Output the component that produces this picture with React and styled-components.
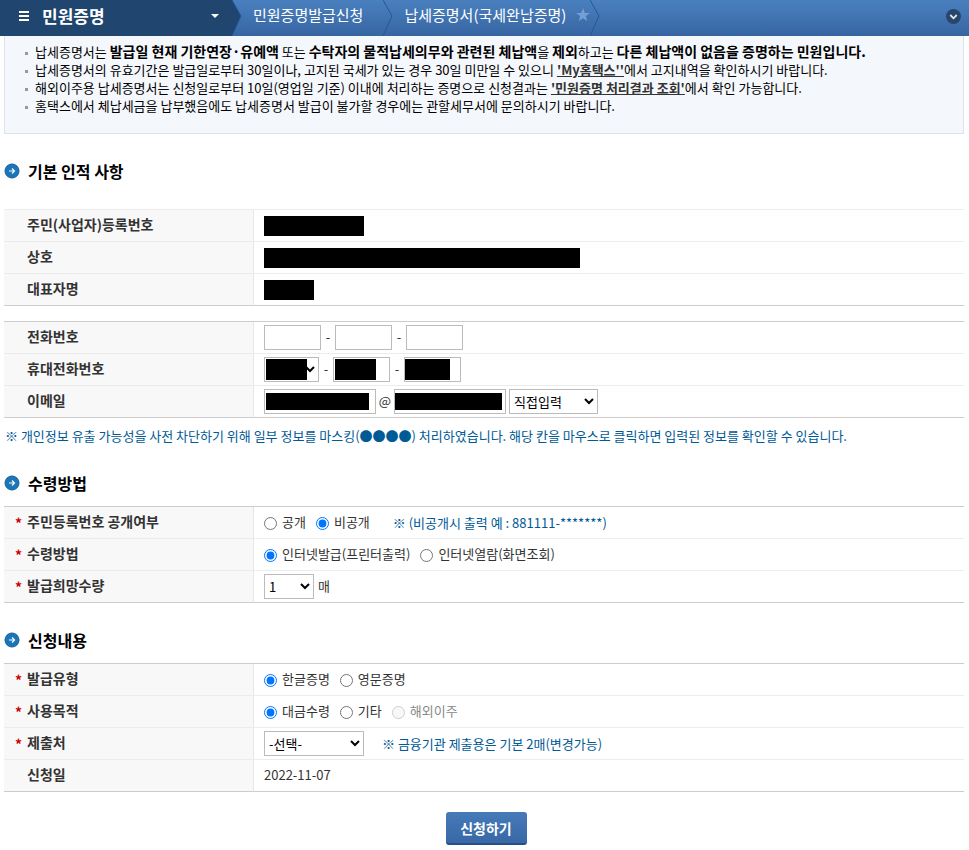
import styled, { createGlobalStyle } from "styled-components";

const GlobalStyle = createGlobalStyle`
  * {
    box-sizing: border-box;
  }

  body {
    margin: 0;
    background: #ffffff;
    color: #333333;
  }

  body, button, input, select {
    font-family: "Noto Sans CJK KR", "Liberation Sans", sans-serif;
    font-size: 13px;
    line-height: 18px;
  }
`;

// Header
const Header = styled.header`
  display: flex;
  align-items: stretch;
  height: 36px;
  background: linear-gradient(#4a80bf, #3765a2);
`;

const MenuButton = styled.button`
  display: flex;
  align-items: center;
  gap: 12px;
  width: 232px;
  padding: 0 13px 4px 18px;
  border: 0;
  background: #20456f;
  color: #ffffff;
  font-size: 17px;
  font-weight: 700;
  text-align: left;

  svg:last-child {
    margin-left: auto;
  }
`;

const Crumbs = styled.nav`
  display: flex;
  flex-grow: 1;
`;

const Crumb = styled.a`
  display: flex;
  align-items: center;
  gap: 10px;
  padding: 0 0 6px 11px;
  color: #ffffff;
  font-size: 15px;
  text-decoration: none;
  white-space: nowrap;

  & + svg {
    margin-left: ${(props) => (props.$last ? "0" : "20px")};
  }
`;

const ExpandButton = styled.button`
  align-self: center;
  display: flex;
  margin-right: 8px;
  padding: 0 0 3px;
  border: 0;
  background: none;
`;

const Main = styled.main`
  padding: 0 5px 4px 4px;
`;

const Notice = styled.ul`
  margin: 0;
  padding: 7px 0 18px 20px;
  border: 1px solid #dde3ee;
  border-top: 0;
  background: #f4f7fc;
  color: #000000;
  list-style: none;
`;

const NoticeItem = styled.li`
  &::before {
    content: "";
    display: inline-block;
    width: 3px;
    height: 3px;
    margin-right: 7px;
    background: #999999;
    vertical-align: middle;
  }

  b {
    font-size: 14px;
    line-height: 14px;
  }

  a {
    color: #333333;
    font-weight: 700;
  }
`;

const SectionTitle = styled.h2`
  display: flex;
  align-items: center;
  gap: 8px;
  margin: 27px 0 ${(props) => (props.$spaced ? "28px" : "13px")};
  color: #000000;
  font-size: 16px;
  line-height: 20px;
`;

const Table = styled.table`
  width: 100%;
  margin-bottom: ${(props) => (props.$spaced ? "15px" : "0")};
  border-top: 1px solid ${(props) => (props.$light ? "#ececec" : "#cccccc")};
  border-spacing: 0;
  table-layout: fixed;

  th, td {
    height: 32px;
    border-bottom: 1px solid #ececec;
  }

  tr:last-child th, tr:last-child td {
    border-bottom-color: #cccccc;
  }

  th {
    width: 250px;
    padding: 0 0 3px 11px;
    border-right: 1px solid #e6e6e6;
    background: #f8f8f8;
    font-size: 14px;
    text-align: left;
  }

  td {
    padding: 0 0 0 10px;
  }
`;

const Mark = styled.span`
  display: inline-block;
  width: 12px;
  color: #cc0000;
  line-height: 14px;
  vertical-align: middle;
`;

const Fields = styled.div`
  display: flex;
  align-items: center;
`;

const Separator = styled.span`
  width: ${(props) => (props.$wide ? "18px" : "14px")};
  padding-bottom: 2px;
  text-align: center;
`;

const Redacted = styled.span`
  display: block;
  width: ${(props) => props.$width};
  height: 20px;
  background: #000000;
`;

// $mask is the width of the hidden part of the value
const maskFill = (props) =>
  props.$mask
    ? `linear-gradient(#000000, #000000) ${props.$flush ? "0" : "1px"} 50% / ${props.$mask} ${props.$maskHeight || "21px"} no-repeat #ffffff`
    : "#ffffff";

const TextBox = styled.input`
  width: ${(props) => props.$width || "57px"};
  height: 25px;
  padding: 0 4px;
  border: 1px solid #bbbbbb;
  background: ${maskFill};
`;

const Select = styled.select`
  width: ${(props) => props.$width};
  height: 25px;
  margin-left: ${(props) => (props.$after ? "3px" : "0")};
  padding: 0;
  border: 1px solid #bbbbbb;
  border-radius: 0;
  background: ${maskFill};
  color: #000000;
`;

const Option = styled.label`
  display: flex;
  align-items: center;
  gap: 5px;
  margin-right: 10px;
  padding-bottom: 2px;
  color: ${(props) => (props.$disabled ? "#888888" : "#333333")};

  input {
    width: 13px;
    height: 13px;
    margin: 4px 0 0;
  }
`;

const Hint = styled.span`
  margin-left: ${(props) => props.$gap || "0"};
  color: #005a96;
`;

const PlainText = styled.span`
  padding: 0 0 2px ${(props) => (props.$indent ? "4px" : "0")};
`;

const MaskingNote = styled.p`
  margin: 0;
  padding: 8px 0 0 1px;
  color: #005a96;
  line-height: 20px;
`;

const Actions = styled.div`
  display: flex;
  justify-content: center;
  padding: 20px 0 0 4px;
`;

const SubmitButton = styled.button`
  width: 81px;
  height: 33px;
  padding: 0;
  border: 0;
  border-bottom: 2px solid #24508a;
  border-radius: 3px;
  background: linear-gradient(#467ab9, #3868a6);
  color: #ffffff;
  font-size: 14px;
  font-weight: 700;
`;

// Icons
const HamburgerIcon = () => (
  <svg width="12" height="10" viewBox="0 0 12 10" fill="#ffffff" aria-hidden="true">
    <path d="M1 0h10v2H1zM1 4h10v2H1zM1 8h10v2H1z" />
  </svg>
);

const CaretIcon = () => (
  <svg width="8" height="4" viewBox="0 0 8 4" fill="#ffffff" aria-hidden="true">
    <path d="M0 0h8L4 4z" />
  </svg>
);

const Chevron = ({ filled }) => (
  <svg width="10" height="36" viewBox="0 0 10 36" fill="none" aria-hidden="true">
    {filled && <path d="M0 0L9 16L0 36z" fill="#20456f" />}
    <path d="M0 0L9 16L0 36" stroke="#205a94" />
  </svg>
);

const StarIcon = () => (
  <svg width="14" height="14" viewBox="0 0 14 14" fill="#759fd2" aria-hidden="true">
    <path d="M7 0l1.8 4.9H14L9.8 8.1l1.5 5L7 10.2l-4.3 2.9 1.5-5L0 4.9h5.2z" />
  </svg>
);

const ExpandIcon = () => (
  <svg width="15" height="15" viewBox="0 0 15 15" fill="none" aria-hidden="true">
    <circle cx="7.5" cy="7.5" r="7.5" fill="#284669" />
    <path d="M4.3 6l3.2 3.3L10.7 6" stroke="#dce5f0" strokeWidth="1.8" />
  </svg>
);

const ArrowIcon = () => (
  <svg width="16" height="16" viewBox="0 0 16 16" fill="none" aria-hidden="true">
    <circle cx="8" cy="8" r="7" fill="#1976b9" stroke="#155f9b" />
    <path d="M5 8h5.5M8 5.5L10.5 8L8 10.5" stroke="#ffffff" strokeWidth="1.2" />
  </svg>
);

function Row({ label, htmlFor, required, children }) {
  return (
    <tr>
      <th scope="row">
        <Mark>{required && "*"}</Mark>
        {htmlFor ? <label htmlFor={htmlFor}>{label}</label> : label}
      </th>
      <td>
        <Fields>{children}</Fields>
      </td>
    </tr>
  );
}

function Radio({ name, label, checked, disabled }) {
  return (
    <Option $disabled={disabled}>
      <input type="radio" name={name} defaultChecked={checked} disabled={disabled} />
      {label}
    </Option>
  );
}

export default function App() {
  return (
    <>
      <GlobalStyle />
      <Header>
        <MenuButton type="button">
          <HamburgerIcon />
          민원증명
          <CaretIcon />
        </MenuButton>
        <Chevron filled />
        <Crumbs>
          <Crumb href="#issue">민원증명발급신청</Crumb>
          <Chevron />
          <Crumb href="#certificate" $last>
            납세증명서(국세완납증명)
            <StarIcon />
          </Crumb>
          <Chevron />
        </Crumbs>
        <ExpandButton type="button" aria-label="펼치기">
          <ExpandIcon />
        </ExpandButton>
      </Header>

      <Main>
        <Notice>
          <NoticeItem>
            납세증명서는 <b>발급일 현재 기한연장·유예액</b> 또는 <b>수탁자의 물적납세의무와 관련된 체납액</b>을 <b>제외</b>하고는 <b>다른 체납액이 없음을 증명하는 민원입니다.</b>
          </NoticeItem>
          <NoticeItem>
            납세증명서의 유효기간은 발급일로부터 30일이나, 고지된 국세가 있는 경우 30일 미만일 수 있으니 <a href="#my">'My홈택스''</a>에서 고지내역을 확인하시기 바랍니다.
          </NoticeItem>
          <NoticeItem>
            해외이주용 납세증명서는 신청일로부터 10일(영업일 기준) 이내에 처리하는 증명으로 신청결과는 <a href="#result">'민원증명 처리결과 조회'</a>에서 확인 가능합니다.
          </NoticeItem>
          <NoticeItem>홈택스에서 체납세금을 납부했음에도 납세증명서 발급이 불가할 경우에는 관할세무서에 문의하시기 바랍니다.</NoticeItem>
        </Notice>

        <SectionTitle $spaced>
          <ArrowIcon />
          기본 인적 사항
        </SectionTitle>
        <Table $light $spaced>
          <tbody>
            <Row label="주민(사업자)등록번호">
              <Redacted $width="100px" />
            </Row>
            <Row label="상호">
              <Redacted $width="316px" />
            </Row>
            <Row label="대표자명">
              <Redacted $width="50px" />
            </Row>
          </tbody>
        </Table>
        <Table>
          <tbody>
            <Row label="전화번호" htmlFor="tel">
              <TextBox id="tel" />
              <Separator>-</Separator>
              <TextBox aria-label="전화번호 가운데 자리" />
              <Separator>-</Separator>
              <TextBox aria-label="전화번호 끝자리" />
            </Row>
            <Row label="휴대전화번호" htmlFor="mobile">
              <Select id="mobile" $width="55px" $mask="41px">
                <option></option>
              </Select>
              <Separator>-</Separator>
              <TextBox $mask="41px" aria-label="휴대전화번호 가운데 자리" />
              <Separator>-</Separator>
              <TextBox $mask="45px" $flush aria-label="휴대전화번호 끝자리" />
            </Row>
            <Row label="이메일" htmlFor="email">
              <TextBox id="email" $width="112px" $mask="103px" $maskHeight="17px" />
              <Separator $wide>@</Separator>
              <TextBox $width="112px" $mask="107px" $maskHeight="17px" $flush aria-label="이메일 도메인" />
              <Select $width="89px" $after aria-label="이메일 도메인 선택">
                <option>직접입력</option>
              </Select>
            </Row>
          </tbody>
        </Table>
        <MaskingNote>※ 개인정보 유출 가능성을 사전 차단하기 위해 일부 정보를 마스킹(●●●●) 처리하였습니다. 해당 칸을 마우스로 클릭하면 입력된 정보를 확인할 수 있습니다.</MaskingNote>

        <SectionTitle>
          <ArrowIcon />
          수령방법
        </SectionTitle>
        <Table>
          <tbody>
            <Row label="주민등록번호 공개여부" required>
              <Radio name="open" label="공개" />
              <Radio name="open" label="비공개" checked />
              <Hint $gap="13px">※ (비공개시 출력 예 : 881111-*******)</Hint>
            </Row>
            <Row label="수령방법" required>
              <Radio name="receive" label="인터넷발급(프린터출력)" checked />
              <Radio name="receive" label="인터넷열람(화면조회)" />
            </Row>
            <Row label="발급희망수량" htmlFor="count" required>
              <Select id="count" $width="50px">
                <option>1</option>
              </Select>
              <PlainText $indent>매</PlainText>
            </Row>
          </tbody>
        </Table>

        <SectionTitle>
          <ArrowIcon />
          신청내용
        </SectionTitle>
        <Table>
          <tbody>
            <Row label="발급유형" required>
              <Radio name="type" label="한글증명" checked />
              <Radio name="type" label="영문증명" />
            </Row>
            <Row label="사용목적" required>
              <Radio name="purpose" label="대금수령" checked />
              <Radio name="purpose" label="기타" />
              <Radio name="purpose" label="해외이주" disabled />
            </Row>
            <Row label="제출처" htmlFor="submit-to" required>
              <Select id="submit-to" $width="100px">
                <option>-선택-</option>
              </Select>
              <Hint $gap="18px">※ 금융기관 제출용은 기본 2매(변경가능)</Hint>
            </Row>
            <Row label="신청일">
              <PlainText>2022-11-07</PlainText>
            </Row>
          </tbody>
        </Table>

        <Actions>
          <SubmitButton type="button">신청하기</SubmitButton>
        </Actions>
      </Main>
    </>
  );
}
